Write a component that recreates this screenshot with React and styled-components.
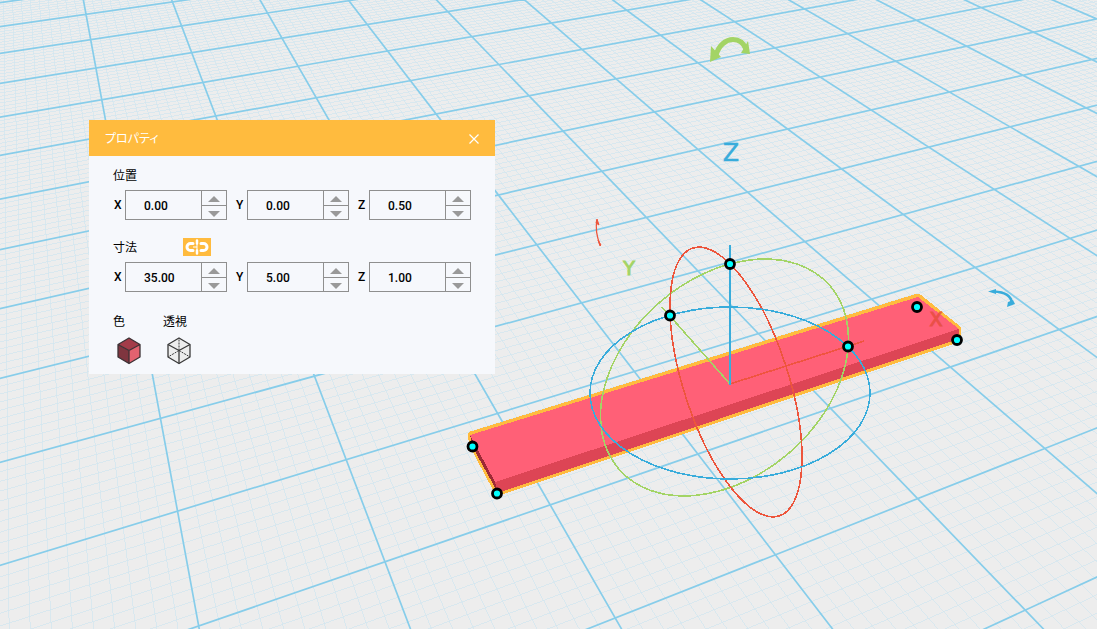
import React, { useState } from "react";
import styled, { createGlobalStyle } from "styled-components";

const GlobalStyle = createGlobalStyle`
  *, *::before, *::after { box-sizing: border-box; }
  body {
    margin: 0;
    background: #ededed;
    color: #000;
    font-family: Roboto, "Noto Sans CJK JP", sans-serif;
    font-size: 12px;
  }
  button { font: inherit; padding: 0; border: 0; background: none; cursor: pointer; }
`;

const Workspace = styled.main`
  position: relative;
  min-height: 100vh;
  padding: 120px 89px;
  overflow: hidden;
`;

const Scene = styled.svg`
  position: absolute;
  inset: 0;
  width: 100%;
  height: 100%;
`;

const Panel = styled.section`
  position: relative;
  width: 406px;
  max-width: 100%;
  background: #f6f8fc;
`;

const PanelHeader = styled.header`
  display: flex;
  align-items: center;
  justify-content: space-between;
  height: 36px;
  padding: 2px 14px 0 16px;
  background: #ffbb3e;
  color: #fff;
`;

const PanelTitle = styled.h1`
  margin: 0;
  font-size: 12px;
  line-height: 18px;
  font-weight: 400;
  font-feature-settings: "palt";
`;

const CloseButton = styled.button`
  display: flex;
  align-items: center;
  justify-content: center;
  width: 14px;
  height: 14px;
  color: #fff;
`;

const PanelBody = styled.div`
  display: flex;
  flex-direction: column;
  gap: 18px;
  padding: 10px 24px 9px;
`;

const Group = styled.div`
  display: flex;
  flex-direction: column;
  gap: 4px;
`;

const GroupHeader = styled.div`
  display: flex;
  align-items: flex-start;
  height: 20px;
  gap: 46px;
`;

const Caption = styled.span`
  font-size: 12px;
  line-height: 20px;
  white-space: nowrap;
`;

const FieldRow = styled.div`
  display: flex;
  gap: 8px;
`;

const Field = styled.div`
  display: flex;
  align-items: center;
`;

const AxisLabel = styled.label`
  width: 12px;
  padding-left: 1px;
  font-size: 12px;
  line-height: 18px;
  font-weight: 500;
`;

const Stepper = styled.div`
  display: flex;
  width: 102px;
  height: 30px;
  border: 1px solid #8f8f8f;
`;

const ValueInput = styled.input`
  flex: 1;
  min-width: 0;
  padding: 2px 0 0 18px;
  border: 0;
  outline: 0;
  background: transparent;
  color: #000;
  font-family: Roboto, sans-serif;
  font-size: 12px;
  font-weight: 500;
`;

const StepButtons = styled.div`
  display: grid;
  grid-template-rows: 1fr 1fr;
  width: 25px;
  border-left: 1px solid #8f8f8f;
`;

const StepButton = styled.button`
  display: flex;
  align-items: center;
  justify-content: center;
  padding-top: 2px;
  & + & { border-top: 1px solid #8f8f8f; }
`;

const LinkButton = styled.button`
  display: flex;
  width: 28px;
  height: 18px;
  background: #ffbb3e;
`;

const MaterialRow = styled.div`
  display: flex;
  gap: 18px;
  padding-top: 2px;
`;

const Material = styled.div`
  display: flex;
  flex-direction: column;
  gap: 5px;
  width: 32px;
`;

const MaterialButton = styled.button`
  display: flex;
  justify-content: center;
  height: 28px;
`;

/* Camera: homography from grid cells on the work plane to view coordinates. */
const CAMERA = [
  [91.2, 0, 86],
  [-12.32, 23.33, 14.3],
  [0.0275, -0.05156, 1],
];

function project(u, v) {
  const [x, y, w] = CAMERA.map(([a, b, c]) => a * u + b * v + c);
  return `${(x / w).toFixed(1)} ${(y / w).toFixed(1)}`;
}

function gridPath(major) {
  const parts = [];
  for (let n = -20; n <= 150; n += 1) {
    if ((n % 10 === 0) === major) {
      const t = n / 10;
      parts.push(`M${project(t, -3)}L${project(t, 15)}`);
      parts.push(`M${project(-2, t)}L${project(14, t)}`);
    }
  }
  return parts.join("");
}

const MAJOR = gridPath(true);
const MINOR = gridPath(false);

const HANDLES = [
  [730, 264], [670, 315.5], [848, 346.5], [917, 307], [957, 340], [472.5, 446.5], [497, 493.5],
];

function Viewport() {
  return (
    <Scene viewBox="0 0 1097 629" preserveAspectRatio="xMidYMid slice" aria-label="3D">
      <path d={MINOR} fill="none" stroke="#d0e6ef" strokeWidth="0.7" shapeRendering="crispEdges" />
      <path d={MAJOR} fill="none" stroke="#87cdea" strokeWidth="1.7" />

      <g strokeLinejoin="round" shapeRendering="crispEdges">
        <path d="M471 435L918 297L958 329L957 339L498 492L473 445Z" fill="#ffbb3e" stroke="#ffbb3e" strokeWidth="7" />
        <path d="M470 434L495 482L498 493L472 446Z" fill="#9c2a36" />
        <path d="M495 482L959 329L958 339L498 493Z" fill="#dd4555" />
        <path d="M470 435L918 297L959 329L495 482Z" fill="#ff6077" />
      </g>

      <g fontFamily="DejaVu Sans, sans-serif" textAnchor="middle">
        <text x="731" y="161" fontSize="24" fill="#38acdb" stroke="#38acdb" strokeWidth="0.4">Z</text>
        <text x="629" y="275" fontSize="19" fill="#a3d465" stroke="#a3d465" strokeWidth="1">Y</text>
        <text x="936" y="326" fontSize="19" fill="#e54d3c" stroke="#e54d3c" strokeWidth="1" opacity="0.8">X</text>
      </g>

      <g fill="none" strokeWidth="1.6" shapeRendering="crispEdges">
        <path d="M730 384L864 341" stroke="#f0543f" />
        <path d="M730 384L662 307" stroke="#a3d465" />
        <path d="M730 385V245" stroke="#38acdb" strokeWidth="2" />
        <ellipse cx="724.5" cy="377.5" rx="139.8" ry="99.3" transform="rotate(-41 724.5 377.5)" stroke="#a3d465" />
        <ellipse cx="736" cy="382" rx="140.7" ry="52.4" transform="rotate(72.1 736 382)" stroke="#ed553c" />
        <ellipse cx="730" cy="393" rx="140" ry="86" stroke="#38acdb" />
      </g>

      <path d="M716 55C719 45 726 39.500 733 39.500C740 39.500 744 44 746 49" fill="none" stroke="#a3d465" strokeWidth="5" />
      <path d="M711 46L710 62L721 57ZM748 41L750 54L741 53Z" fill="#a3d465" />
      <path d="M994 291.500C1004 292 1011 295 1012 303" fill="none" stroke="#38acdb" strokeWidth="2.500" />
      <path d="M988 291.500L996 289L996 294ZM1007 307L1015 304L1013 300L1008 302Z" fill="#38acdb" />
      <path d="M597 220C595 229 597 237 600 245" fill="none" stroke="#ed553c" strokeWidth="1.300" />
      <path d="M597 219L599 225L596 223ZM598 240L601 245L600 246Z" fill="#ed553c" stroke="#ed553c" />

      <g fill="#0ff" stroke="#000" strokeWidth="2.800">
        {HANDLES.map(([x, y]) => (
          <circle key={x} cx={x} cy={y} r="4.500" />
        ))}
      </g>
    </Scene>
  );
}

function Arrow({ down }) {
  return (
    <svg width="12" height="6" viewBox="0 0 12 6" aria-hidden="true">
      <path d={down ? "M0 0H12L6 6Z" : "M0 6H12L6 0Z"} fill="#999" />
    </svg>
  );
}

function AxisField({ group, axis, initial }) {
  const [value, setValue] = useState(initial);
  const id = `${group}-${axis}`;
  const step = (delta) => setValue((v) => ((parseFloat(v) || 0) + delta).toFixed(2));
  return (
    <Field>
      <AxisLabel htmlFor={id}>{axis}</AxisLabel>
      <Stepper>
        <ValueInput id={id} value={value} onChange={(e) => setValue(e.target.value)} />
        <StepButtons>
          <StepButton type="button" aria-label={`${axis} +`} onClick={() => step(1)}><Arrow /></StepButton>
          <StepButton type="button" aria-label={`${axis} -`} onClick={() => step(-1)}><Arrow down /></StepButton>
        </StepButtons>
      </Stepper>
    </Field>
  );
}

function AxisFields({ group, values }) {
  return (
    <FieldRow>
      {["X", "Y", "Z"].map((axis, i) => (
        <AxisField key={axis} group={group} axis={axis} initial={values[i]} />
      ))}
    </FieldRow>
  );
}

function LinkIcon() {
  return (
    <svg width="28" height="18" viewBox="0 0 28 18" aria-hidden="true">
      <g fill="none" stroke="#fff" strokeWidth="3" strokeLinecap="round">
        <path d="M10 5.500H7.500A3.500 3.500 0 0 0 7.500 12.500H10" />
        <path d="M18 5.500H20.500A3.500 3.500 0 0 1 20.500 12.500H18" />
        <path d="M14 2.500V5.500M14 12.500V15.500" strokeWidth="2.500" />
        <path d="M14 6V12M10 9H14" strokeWidth="1" strokeLinecap="butt" />
      </g>
    </svg>
  );
}

function SolidCube() {
  return (
    <svg width="24" height="28" viewBox="0 0 24 28" aria-hidden="true">
      <path d="M12 1L23 7.500L12 13.500L1 7.500Z" fill="#a33c49" />
      <path d="M1 7.500L12 13.500V26.500L1 20Z" fill="#7f353f" />
      <path d="M23 7.500L12 13.500V26.500L23 20Z" fill="#e2626f" />
      <path d="M12 1L23 7.500V20L12 26.500L1 20V7.500ZM1 7.500L12 13.500L23 7.500M12 13.500V26.500" fill="none" stroke="#3c3235" strokeWidth="1.300" strokeLinejoin="round" />
    </svg>
  );
}

function GlassCube() {
  return (
    <svg width="24" height="28" viewBox="0 0 24 28" aria-hidden="true">
      <g stroke="#3a3a3a" strokeWidth="1.300" strokeLinejoin="round">
        <path d="M12 1L23 7.500V20L12 26.500L1 20V7.500Z" fill="#ededed" />
        <path d="M1 7.500L12 13.500L23 7.500M12 13.500V26.500" fill="none" />
        <path d="M12 13.500V1M12 13.500L1 20M12 13.500L23 20" fill="none" strokeWidth="1" strokeDasharray="2 1" />
      </g>
    </svg>
  );
}

export default function App() {
  return (
    <>
      <GlobalStyle />
      <Workspace>
        <Viewport />
        <Panel>
          <PanelHeader>
            <PanelTitle>プロパティ</PanelTitle>
            <CloseButton type="button" aria-label="閉じる">
              <svg width="10" height="10" viewBox="0 0 10 10" aria-hidden="true">
                <path d="M0.500 0.500L9.500 9.500M9.500 0.500L0.500 9.500" stroke="#fff" strokeWidth="1.200" />
              </svg>
            </CloseButton>
          </PanelHeader>
          <PanelBody>
            <Group>
              <GroupHeader><Caption>位置</Caption></GroupHeader>
              <AxisFields group="position" values={["0.00", "0.00", "0.50"]} />
            </Group>
            <Group>
              <GroupHeader>
                <Caption>寸法</Caption>
                <LinkButton type="button" aria-label="比率を固定"><LinkIcon /></LinkButton>
              </GroupHeader>
              <AxisFields group="size" values={["35.00", "5.00", "1.00"]} />
            </Group>
            <MaterialRow>
              <Material>
                <Caption id="color">色</Caption>
                <MaterialButton type="button" aria-labelledby="color"><SolidCube /></MaterialButton>
              </Material>
              <Material>
                <Caption id="glass">透視</Caption>
                <MaterialButton type="button" aria-labelledby="glass"><GlassCube /></MaterialButton>
              </Material>
            </MaterialRow>
          </PanelBody>
        </Panel>
      </Workspace>
    </>
  );
}
